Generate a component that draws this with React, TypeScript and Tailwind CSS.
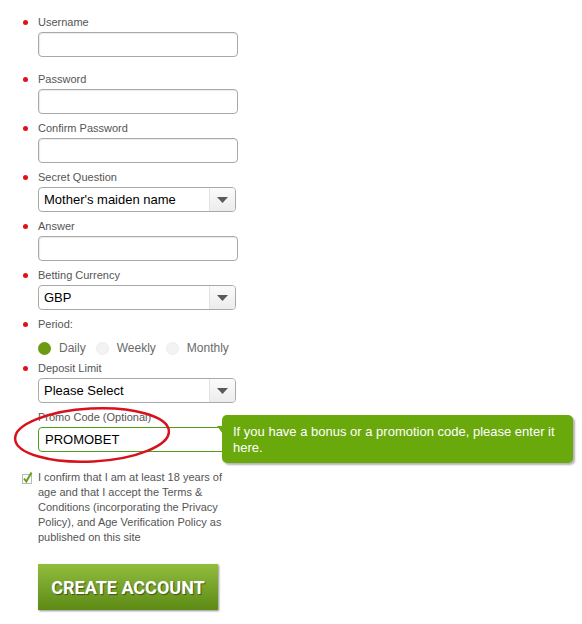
import React from "react";

interface FieldProps {
  label: string;
  required?: boolean;
  className?: string;
  children: React.ReactNode;
}

function Field({ label, required = true, className = "", children }: FieldProps) {
  return (
    <div className={`flex flex-col ${className}`}>
      <div className="flex items-center h-[14px] -ml-[15px]">
        <span
          className={`w-[5px] h-[5px] rounded-full mr-[10px] ${required ? "bg-[#e3101a]" : "bg-transparent"}`}
        />
        <span className="text-[11px] leading-[14px] text-[#555]">{label}</span>
      </div>
      <div className="mt-[3px]">{children}</div>
    </div>
  );
}

function TextBox({ value = "", green = false }: { value?: string; green?: boolean }) {
  return (
    <div
      className={`w-[200px] h-[25px] rounded-[4px] border bg-white flex items-center px-[6px] text-[13px] text-black ${
        green ? "border-[#4e9b1d]" : "border-[#a9a9a9] shadow-[inset_1px_1px_1px_rgba(0,0,0,0.08)]"
      }`}
    >
      {value}
    </div>
  );
}

function SelectBox({ value }: { value: string }) {
  return (
    <div className="w-[198px] h-[25px] rounded-[4px] border border-[#a9a9a9] bg-white flex overflow-hidden">
      <div className="flex-1 flex items-center px-[5px] text-[13px] text-black">{value}</div>
      <div className="w-[26px] border-l border-[#e2e2e2] bg-gradient-to-b from-[#fbfbfb] to-[#ececec] flex items-center justify-center">
        <svg width="11" height="6" viewBox="0 0 11 6">
          <polygon points="0,0 11,0 5.5,6" fill="#5a5a5a" />
        </svg>
      </div>
    </div>
  );
}

function Radio({ label, checked = false }: { label: string; checked?: boolean }) {
  return (
    <div className="flex items-center mr-[10px]">
      <span
        className={`w-[13px] h-[13px] rounded-full ${
          checked ? "bg-[#6c9a12]" : "bg-[#f3f3f3] border border-[#ececec]"
        }`}
      />
      <span className="ml-[8px] text-[12px] text-[#6a6a6a]">{label}</span>
    </div>
  );
}

export default function App() {
  return (
    <div className="relative min-h-[624px] bg-white font-['Liberation_Sans',Arial,sans-serif]">
      <div className="flex flex-col pl-[38px] pt-[15px]">
        <Field label="Username">
          <TextBox />
        </Field>
        <Field label="Password" className="mt-[15px]">
          <TextBox />
        </Field>
        <Field label="Confirm Password" className="mt-[7px]">
          <TextBox />
        </Field>
        <Field label="Secret Question" className="mt-[7px]">
          <SelectBox value="Mother's maiden name" />
        </Field>
        <Field label="Answer" className="mt-[7px]">
          <TextBox />
        </Field>
        <Field label="Betting Currency" className="mt-[7px]">
          <SelectBox value="GBP" />
        </Field>
        <Field label="Period:" className="mt-[7px]">
          <div className="flex items-center h-[16px] mt-[6px]">
            <Radio label="Daily" checked />
            <Radio label="Weekly" />
            <Radio label="Monthly" />
          </div>
        </Field>
        <Field label="Deposit Limit" className="mt-[5px]">
          <SelectBox value="Please Select" />
        </Field>
        <Field label="Promo Code (Optional)" required={false} className="mt-[7px]">
          <TextBox value="PROMOBET" green />
        </Field>

        <div className="flex items-start mt-[18px] -ml-[16px]">
          <svg width="13" height="14" viewBox="0 0 13 14" className="mt-[1px] shrink-0">
            <rect x="0.5" y="3.5" width="9" height="9" fill="#fff" stroke="#b9b9b9" />
            <path d="M2 7.5 L4.3 10.5 L9.5 1.5" fill="none" stroke="#63a11a" strokeWidth="2" />
          </svg>
          <p className="ml-[3px] w-[190px] text-[11px] leading-[15px] text-[#555]">
            I confirm that I am at least 18 years of age and that I accept the Terms &amp; Conditions
            (incorporating the Privacy Policy), and Age Verification Policy as published on this site
          </p>
        </div>

        <button className="mt-[19px] w-[180px] h-[46px] bg-gradient-to-b from-[#92bd3e] to-[#5c8a12] shadow-[1px_1px_2px_rgba(0,0,0,0.45)] text-white font-['Roboto',Arial,sans-serif] font-bold text-[18px] [text-shadow:1px_1px_1px_rgba(0,0,0,0.45)]">
          CREATE ACCOUNT
        </button>
      </div>

      {/* promo tooltip */}
      <div className="absolute left-[222px] top-[415px] w-[351px] h-[48px] rounded-[5px] bg-[#6aa90c] shadow-[2px_2px_2px_rgba(0,0,0,0.3)] pl-[11px] pt-[9px] text-[13px] leading-[16px] text-white">
        <svg width="6" height="8" viewBox="0 0 6 8" className="absolute -left-[5px] top-[11px]">
          <polygon points="0,0 6,0 6,8" fill="#6aa90c" />
        </svg>
        If you have a bonus or a promotion code, please enter it here.
      </div>

      {/* hand-drawn red highlight */}
      <svg width="164" height="64" viewBox="0 0 164 64" className="absolute left-[10px] top-[403px] pointer-events-none">
        <ellipse cx="82" cy="32" rx="77" ry="26.5" fill="none" stroke="#d8121c" strokeWidth="2.5" transform="rotate(-3 82 32)" />
      </svg>
    </div>
  );
}
